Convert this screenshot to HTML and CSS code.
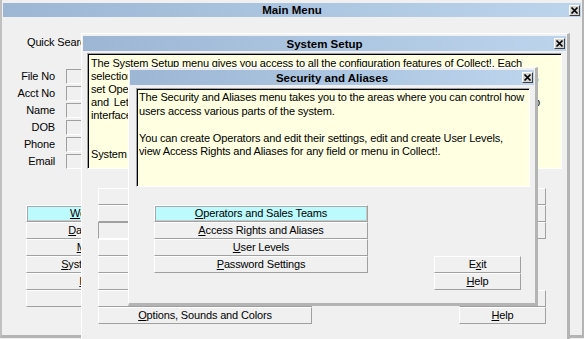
FILE: index.html
```html
<!DOCTYPE html>
<html>
<head>
<meta charset="utf-8">
<title>Main Menu</title>
<link rel="stylesheet" href="styles.css">
</head>
<body>
<div class="screen">
  <div class="win main-win">
    <div class="titlebar tb-main">
      <span class="title">Main Menu</span>
      <span class="close"><svg width="9" height="9" viewBox="0 0 9 9"><path d="M1.5 1.5L7.5 7.5M7.5 1.5L1.5 7.5" stroke="#000" stroke-width="1.7"/></svg></span>
    </div>
    <div class="main-body">
      <div class="quick"><span class="lbl">Quick Search</span><span class="field quick-field"></span></div>
      <div class="form">
        <span class="lbl">File No</span><span class="field"></span>
        <span class="lbl">Acct No</span><span class="field"></span>
        <span class="lbl">Name</span><span class="field"></span>
        <span class="lbl">DOB</span><span class="field"></span>
        <span class="lbl">Phone</span><span class="field"></span>
        <span class="lbl">Email</span><span class="field"></span>
      </div>
      <div class="menu-col">
        <div class="btn sel"><u>W</u>ork With</div>
        <div class="btn"><u>D</u>ashboard</div>
        <div class="btn"><u>M</u>onitor</div>
        <div class="btn"><u>S</u>ystem Setup</div>
        <div class="btn"><u>I</u>mport</div>
        <div class="btn"></div>
      </div>
    </div>
  </div>

  <div class="win dlg setup">
    <div class="titlebar">
      <span class="title">System Setup</span>
      <span class="close"><svg width="9" height="9" viewBox="0 0 9 9"><path d="M1.5 1.5L7.5 7.5M7.5 1.5L1.5 7.5" stroke="#000" stroke-width="1.7"/></svg></span>
    </div>
    <div class="note setup-note">
      <div class="ln"><span class="jl w1">The System Setup menu gives you access to all the configuration features of Collect!. Each</span></div>
      <div class="ln"><span class="jl w2">selection on this menu takes you to a further menu where you can define system settings,</span></div>
      <div class="ln">set Operators and their security access, set up financial information, design Contact Plans</div>
      <div class="ln"><span class="jl w4">and Letters and customize the appearance of Collect! by choosing options for the desktop</span></div>
      <div class="ln">interface.</div>
      <div class="ln">&nbsp;</div>
      <div class="ln">&nbsp;</div>
      <div class="ln">System</div>
    </div>
    <div class="setup-grid">
      <div class="btn c1 r1"></div>
      <div class="btn c1 r2"></div>
      <div class="btn c1 r3 pressed"></div>
      <div class="btn c1 r4"></div>
      <div class="btn c1 r5"></div>
      <div class="btn c1 r6"></div>
      <div class="btn c1 r7"></div>
      <div class="btn c1 r8"><u>O</u>ptions, Sounds and Colors</div>
      <div class="btn c3 r1"></div>
      <div class="btn c3 r2"></div>
      <div class="btn c3 r3"></div>
      <div class="btn c3 r7"></div>
      <div class="btn c3 r8"><u>H</u>elp</div>
    </div>
  </div>

  <div class="win dlg security">
    <div class="titlebar">
      <span class="title">Security and Aliases</span>
      <span class="close"><svg width="9" height="9" viewBox="0 0 9 9"><path d="M1.5 1.5L7.5 7.5M7.5 1.5L1.5 7.5" stroke="#000" stroke-width="1.7"/></svg></span>
    </div>
    <div class="note sec-note">
      <div class="ln">The Security and Aliases menu takes you to the areas where you can control how</div>
      <div class="ln">users access various parts of the system.</div>
      <div class="ln">&nbsp;</div>
      <div class="ln">You can create Operators and edit their settings, edit and create User Levels,</div>
      <div class="ln">view Access Rights and Aliases for any field or menu in Collect!.</div>
    </div>
    <div class="sec-grid">
      <div class="btn sel c1 r1"><u>O</u>perators and Sales Teams</div>
      <div class="btn c1 r2"><u>A</u>ccess Rights and Aliases</div>
      <div class="btn c1 r3"><u>U</u>ser Levels</div>
      <div class="btn c1 r4"><u>P</u>assword Settings</div>
      <div class="btn c3 r4">E<u>x</u>it</div>
      <div class="btn c3 r5"><u>H</u>elp</div>
    </div>
  </div>
</div>
</body>
</html>
```

FILE: styles.css
```css
* { box-sizing: border-box; }
html, body { margin: 0; padding: 0; background: #f0f0f0; }
body {
  font-family: "Liberation Sans", Arial, sans-serif;
  font-size: 11px;
  letter-spacing: -0.15px;
  color: #000;
}
.screen {
  position: relative;
  width: 584px;
  height: 339px;
  overflow: hidden;
}
u { text-decoration: underline; text-underline-offset: 1px; }

/* windows */
.win { background: #f0f0f0; }
.main-win {
  width: 584px;
  height: 338px;
  border-left: 2px solid #c0c0c0;
  border-right: 2px solid #b4b4b4;
  border-bottom: 3px solid #b4b4b4;
  padding: 3px 1px 0 1px;
}
.dlg {
  position: absolute;
  border-top: 1px solid #fff;
  border-left: 1px solid #fff;
  border-right: 3px solid #b4b4b4;
  border-bottom: 3px solid #b4b4b4;
  padding: 2px 1px 0 1px;
}
.setup { left: 81px; top: 33px; width: 489px; height: 330px; }
.security { left: 128px; top: 67px; width: 410px; height: 239px; }

/* title bars */
.titlebar {
  height: 15px;
  display: grid;
  grid-template-columns: 1fr auto 1fr;
  align-items: center;
  background: linear-gradient(to right, #9cb6d4, #bcd4ec);
}
.tb-main { height: 14px; }
.title {
  grid-column: 2;
  font-weight: bold;
  font-size: 11.5px;
  letter-spacing: 0;
  line-height: 14px;
  white-space: nowrap;
}
.close {
  grid-column: 3;
  justify-self: end;
  width: 11px;
  height: 11px;
  margin-right: 1px;
  border: 1px solid;
  border-color: #fff #404040 #404040 #fff;
  background: #d4d4d4;
  display: flex;
  align-items: center;
  justify-content: center;
}
.close svg { display: block; }

/* main body */
.main-body { padding-top: 18px; }
.lbl { line-height: 15px; white-space: nowrap; }
.quick {
  display: flex;
  gap: 6px;
  padding-left: 24px;
  height: 15px;
}
.field {
  height: 15px;
  border: 1px solid;
  border-color: #a0a0a0 #fff #fff #a0a0a0;
  background: #f0f0f0;
}
.quick-field { width: 150px; }
.form {
  margin-top: 19px;
  display: grid;
  grid-template-columns: 52px 120px;
  column-gap: 11px;
  row-gap: 2px;
}
.form .lbl { text-align: right; }
.menu-col {
  margin-top: 36px;
  margin-left: 23px;
  width: 137px;
  display: flex;
  flex-direction: column;
}

/* buttons */
.btn {
  height: 17px;
  border: 1px solid;
  border-color: #fff #a0a0a0 #a0a0a0 #fff;
  background: #f0f0f0;
  text-align: center;
  line-height: 15px;
  white-space: nowrap;
  overflow: hidden;
}
.btn.sel {
  background: #bdfafd;
  box-shadow: inset 1px 1px 0 #a8a8a8, inset -1px -1px 0 #c8c8c8;
}
.btn.pressed { border-color: #a0a0a0 #fff #fff #a0a0a0; }

/* yellow notes */
.note {
  background: #ffffe1;
  border: 1px solid;
  border-color: #a0a0a0 #fff #fff #a0a0a0;
  box-shadow: inset 1px 1px 0 #000;
  white-space: nowrap;
  overflow: hidden;
}
.setup-note {
  margin: 2px 4px 0 4px;
  height: 116px;
  padding: 3px 3px 0 3px;
  line-height: 13px;
}
.jl {
  display: inline-block;
  white-space: normal;
  text-align: justify;
  text-align-last: justify;
}
.w1 { width: 431px; }
.w2 { width: 448px; }
.w4 { width: 449px; }
.sec-note {
  margin: 3px 4px 0 6px;
  height: 99px;
  padding: 2px 2px 0 2px;
  line-height: 13.5px;
}

/* button grids */
.setup-grid {
  margin: 19px 20px 0 15px;
  display: grid;
  grid-template-columns: 214px 1fr 87px;
  grid-template-rows: repeat(8, 17px);
}
.sec-grid {
  margin: 18px 0 0 24px;
  display: grid;
  grid-template-columns: 214px 66px 87px;
  grid-template-rows: repeat(5, 17px);
}
.c1 { grid-column: 1; }
.c3 { grid-column: 3; }
.r1 { grid-row: 1; }
.r2 { grid-row: 2; }
.r3 { grid-row: 3; }
.r4 { grid-row: 4; }
.r5 { grid-row: 5; }
.r6 { grid-row: 6; }
.r7 { grid-row: 7; }
.r8 { grid-row: 8; }
```
